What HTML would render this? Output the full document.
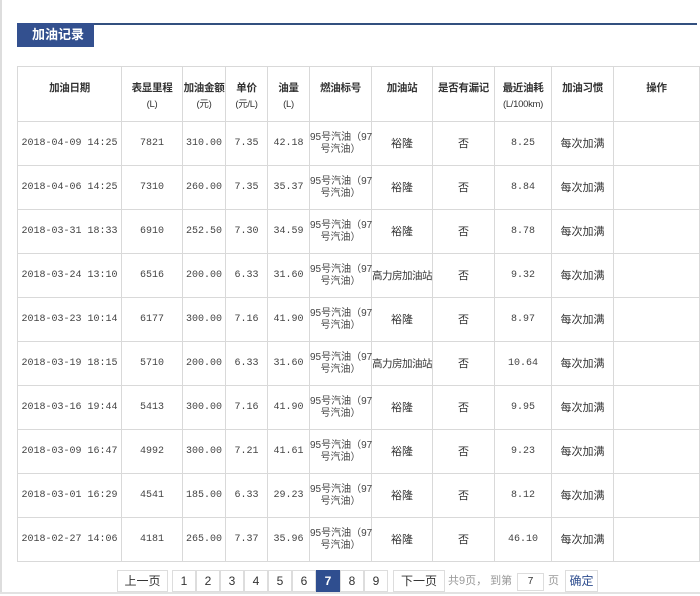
<!DOCTYPE html>
<html><head><meta charset="utf-8"><style>
body{margin:0;width:700px;height:596px;background:#fff;font-family:"Liberation Sans","Noto Sans CJK SC",sans-serif;position:relative;overflow:hidden}
.frameL{position:absolute;left:0;top:0;width:2px;height:593px;background:#ddd}
.frameB{position:absolute;left:0;top:592px;width:700px;height:2px;background:#e2e2e2}
.bar{position:absolute;left:17px;top:23px;width:680px;height:2px;background:#33507f}
.title{position:absolute;left:17px;top:23px;width:77px;height:24px;background:#33508f;color:#fff;font-size:13px;font-weight:bold;line-height:24px;text-indent:15px}
table{position:absolute;left:17px;top:66px;border-collapse:collapse;table-layout:fixed;width:682px}
td,th{border:1px solid #d9d9d9;text-align:center;font-size:11px;color:#333;padding:0;white-space:nowrap;overflow:visible}
th{font-weight:bold;font-size:10.5px;vertical-align:top;padding-top:13px;height:41px;line-height:17px;letter-spacing:-0.3px}
th small{font-weight:normal;font-size:9.5px;display:block;line-height:16px}
td{height:43px;line-height:12px}
td.m{font-family:"Liberation Mono","Noto Sans CJK SC",monospace;font-size:10px;color:#444}
td.f{font-size:10px;color:#444}
td.s{font-size:10.5px;letter-spacing:-0.5px}
.pg{position:absolute;top:570px;height:22px;border:1px solid #ddd;box-sizing:border-box;font-size:12px;color:#333;text-align:center;line-height:20px;background:#fff}
.cur{background:#2f4e8f;color:#fff;border-color:#2f4e8f;font-weight:bold}
.tx{position:absolute;top:570px;line-height:22px;font-size:11px;color:#999}
</style></head><body>
<div class="frameL"></div><div class="frameB"></div>
<div class="bar"></div><div class="title">加油记录</div>
<table>
<colgroup><col style="width:104px"><col style="width:61px"><col style="width:43px"><col style="width:42px"><col style="width:42px"><col style="width:62px"><col style="width:61px"><col style="width:62px"><col style="width:57px"><col style="width:62px"><col style="width:86px"></colgroup>
<tr><th>加油日期</th><th>表显里程<small>(L)</small></th><th>加油金额<small>(元)</small></th><th>单价<small>(元/L)</small></th><th>油量<small>(L)</small></th><th>燃油标号</th><th>加油站</th><th>是否有漏记</th><th>最近油耗<small>(L/100km)</small></th><th>加油习惯</th><th>操作</th></tr>
<tr><td class="m">2018-04-09 14:25</td><td class="m">7821</td><td class="m">310.00</td><td class="m">7.35</td><td class="m">42.18</td><td class="f">95号汽油（97<br>号汽油）</td><td>裕隆</td><td>否</td><td class="m">8.25</td><td>每次加满</td><td></td></tr>
<tr><td class="m">2018-04-06 14:25</td><td class="m">7310</td><td class="m">260.00</td><td class="m">7.35</td><td class="m">35.37</td><td class="f">95号汽油（97<br>号汽油）</td><td>裕隆</td><td>否</td><td class="m">8.84</td><td>每次加满</td><td></td></tr>
<tr><td class="m">2018-03-31 18:33</td><td class="m">6910</td><td class="m">252.50</td><td class="m">7.30</td><td class="m">34.59</td><td class="f">95号汽油（97<br>号汽油）</td><td>裕隆</td><td>否</td><td class="m">8.78</td><td>每次加满</td><td></td></tr>
<tr><td class="m">2018-03-24 13:10</td><td class="m">6516</td><td class="m">200.00</td><td class="m">6.33</td><td class="m">31.60</td><td class="f">95号汽油（97<br>号汽油）</td><td class="s">高力房加油站</td><td>否</td><td class="m">9.32</td><td>每次加满</td><td></td></tr>
<tr><td class="m">2018-03-23 10:14</td><td class="m">6177</td><td class="m">300.00</td><td class="m">7.16</td><td class="m">41.90</td><td class="f">95号汽油（97<br>号汽油）</td><td>裕隆</td><td>否</td><td class="m">8.97</td><td>每次加满</td><td></td></tr>
<tr><td class="m">2018-03-19 18:15</td><td class="m">5710</td><td class="m">200.00</td><td class="m">6.33</td><td class="m">31.60</td><td class="f">95号汽油（97<br>号汽油）</td><td class="s">高力房加油站</td><td>否</td><td class="m">10.64</td><td>每次加满</td><td></td></tr>
<tr><td class="m">2018-03-16 19:44</td><td class="m">5413</td><td class="m">300.00</td><td class="m">7.16</td><td class="m">41.90</td><td class="f">95号汽油（97<br>号汽油）</td><td>裕隆</td><td>否</td><td class="m">9.95</td><td>每次加满</td><td></td></tr>
<tr><td class="m">2018-03-09 16:47</td><td class="m">4992</td><td class="m">300.00</td><td class="m">7.21</td><td class="m">41.61</td><td class="f">95号汽油（97<br>号汽油）</td><td>裕隆</td><td>否</td><td class="m">9.23</td><td>每次加满</td><td></td></tr>
<tr><td class="m">2018-03-01 16:29</td><td class="m">4541</td><td class="m">185.00</td><td class="m">6.33</td><td class="m">29.23</td><td class="f">95号汽油（97<br>号汽油）</td><td>裕隆</td><td>否</td><td class="m">8.12</td><td>每次加满</td><td></td></tr>
<tr><td class="m">2018-02-27 14:06</td><td class="m">4181</td><td class="m">265.00</td><td class="m">7.37</td><td class="m">35.96</td><td class="f">95号汽油（97<br>号汽油）</td><td>裕隆</td><td>否</td><td class="m">46.10</td><td>每次加满</td><td></td></tr>
</table>
<div class="pg" style="left:117px;width:51px">上一页</div>
<div class="pg" style="left:172px;width:24px">1</div>
<div class="pg" style="left:196px;width:24px">2</div>
<div class="pg" style="left:220px;width:24px">3</div>
<div class="pg" style="left:244px;width:24px">4</div>
<div class="pg" style="left:268px;width:24px">5</div>
<div class="pg" style="left:292px;width:24px">6</div>
<div class="pg cur" style="left:316px;width:24px">7</div>
<div class="pg" style="left:340px;width:24px">8</div>
<div class="pg" style="left:364px;width:24px">9</div>
<div class="pg" style="left:393px;width:52px">下一页</div>
<div class="tx" style="left:448px">共9页，&nbsp;到第</div>
<div class="pg" style="left:517px;width:27px;top:573px;height:18px;line-height:16px;font-size:10px">7</div>
<div class="tx" style="left:548px">页</div>
<div class="pg" style="left:565px;width:33px;color:#2f4e8f">确定</div>
</body></html>
